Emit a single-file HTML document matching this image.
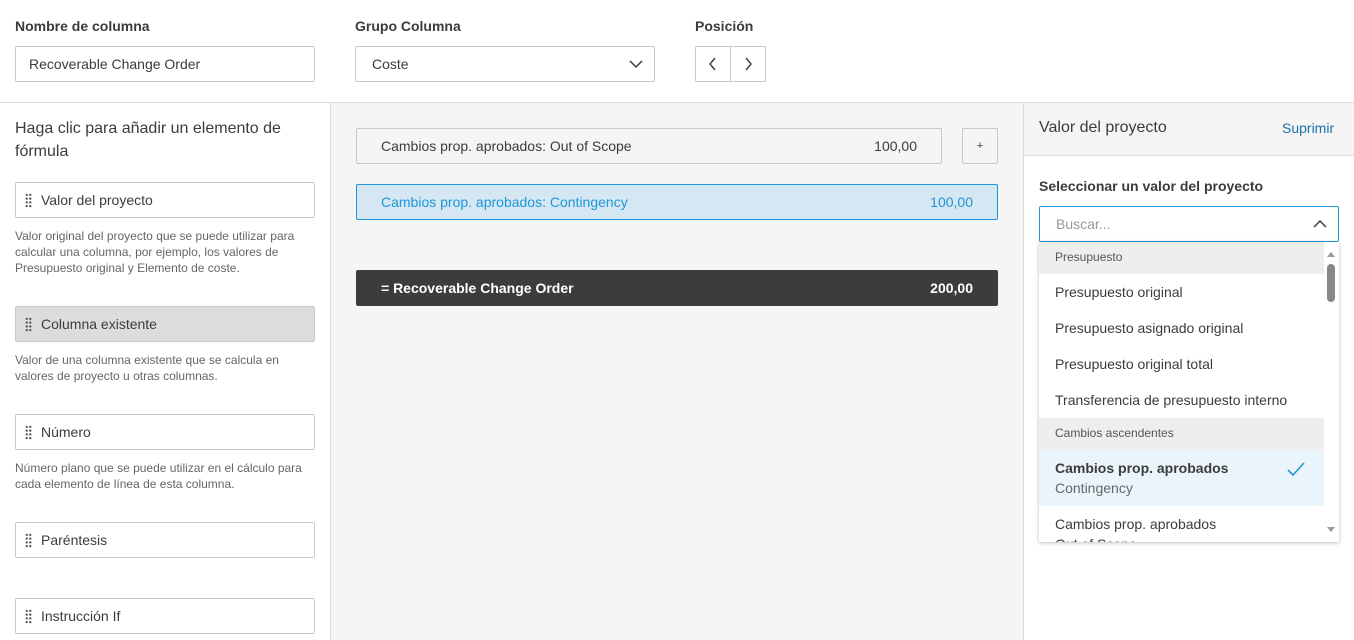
<!DOCTYPE html>
<html><head><meta charset="utf-8"><style>
*{box-sizing:border-box;margin:0;padding:0}
body{width:1354px;height:640px;overflow:hidden;font-family:"Liberation Sans",sans-serif;color:#3c3c3c;background:#fff;position:relative;font-size:14px}
.a{position:absolute}
.lbl{font-weight:bold;font-size:14px;color:#3c3c3c}
.box{position:absolute;border:1px solid #c8c8c8;border-radius:2px;background:#fff;display:flex;align-items:center}
.grip{display:inline-block;width:7px;height:15px;margin:0 9px 0 9px;background-image:radial-gradient(circle,#555 1px,transparent 1.3px);background-size:3.5px 3.75px}
.desc{position:absolute;font-size:12px;line-height:16px;color:#666;width:305px}
.opt{position:absolute;left:1055px;font-size:14px;color:#3c3c3c}
</style></head><body>
<div class="a lbl" style="left:15px;top:18px">Nombre de columna</div>
<div class="a lbl" style="left:355px;top:18px">Grupo Columna</div>
<div class="a lbl" style="left:695px;top:18px">Posición</div>
<div class="box" style="left:15px;top:46px;width:300px;height:36px;padding-left:13px">Recoverable Change Order</div>
<div class="box" style="left:355px;top:46px;width:300px;height:36px;padding-left:16px">Coste
<svg class="a" style="left:273px;top:12px" width="14" height="10"><path d="M1 2l6 6 6-6" stroke="#3c3c3c" stroke-width="1.5" fill="none"/></svg></div>
<div class="box" style="left:695px;top:46px;width:71px;height:36px"></div>
<div class="a" style="left:730px;top:46px;width:1px;height:36px;background:#c8c8c8"></div>
<svg class="a" style="left:708px;top:57px" width="10" height="14"><path d="M7 1L2 7l5 6" stroke="#3c3c3c" stroke-width="1.4" fill="none"/></svg>
<svg class="a" style="left:743px;top:57px" width="10" height="14"><path d="M3 1l5 6-5 6" stroke="#3c3c3c" stroke-width="1.4" fill="none"/></svg>
<div class="a" style="left:0;top:102px;width:1354px;height:1px;background:#dcdcdc"></div>

<div class="a" style="left:15px;top:117px;font-size:16px;line-height:23px;width:300px;color:#3c3c3c">Haga clic para añadir un elemento de fórmula</div>
<div class="box" style="left:15px;top:182px;width:300px;height:36px"><span class="grip"></span>Valor del proyecto</div>
<div class="desc" style="left:15px;top:228px">Valor original del proyecto que se puede utilizar para calcular una columna, por ejemplo, los valores de Presupuesto original y Elemento de coste.</div>
<div class="box" style="left:15px;top:306px;width:300px;height:36px;background:#dcdcdc"><span class="grip"></span>Columna existente</div>
<div class="desc" style="left:15px;top:352px">Valor de una columna existente que se calcula en valores de proyecto u otras columnas.</div>
<div class="box" style="left:15px;top:414px;width:300px;height:36px"><span class="grip"></span>Número</div>
<div class="desc" style="left:15px;top:460px">Número plano que se puede utilizar en el cálculo para cada elemento de línea de esta columna.</div>
<div class="box" style="left:15px;top:522px;width:300px;height:36px"><span class="grip"></span>Paréntesis</div>
<div class="box" style="left:15px;top:598px;width:300px;height:36px"><span class="grip"></span>Instrucción If</div>

<div class="a" style="left:330px;top:103px;width:694px;height:537px;background:#f5f5f5;border-left:1px solid #dcdcdc;border-right:1px solid #dcdcdc"></div>
<div class="box" style="left:356px;top:128px;width:586px;height:36px;padding:0 24px;justify-content:space-between;background:#f5f5f5"><span>Cambios prop. aprobados: Out of Scope</span><span>100,00</span></div>
<div class="box" style="left:962px;top:128px;width:36px;height:36px;justify-content:center;font-size:11px;background:#f5f5f5">+</div>
<div class="box" style="left:356px;top:184px;width:642px;height:36px;padding:0 24px;justify-content:space-between;background:#d4e7f3;border-color:#1f96d6;color:#1f96d6"><span>Cambios prop. aprobados: Contingency</span><span>100,00</span></div>
<div class="box" style="left:356px;top:270px;width:642px;height:36px;padding:0 24px;justify-content:space-between;background:#3c3c3c;border-color:#3c3c3c;color:#fff;font-weight:bold"><span>= Recoverable Change Order</span><span>200,00</span></div>

<div class="a" style="left:1024px;top:103px;width:330px;height:53px;background:#f5f5f5;border-bottom:1px solid #dcdcdc"></div>
<div class="a" style="left:1039px;top:119px;font-size:16px">Valor del proyecto</div>
<div class="a" style="left:1282px;top:120px;font-size:14px;color:#1f70a8">Suprimir</div>
<div class="a lbl" style="left:1039px;top:178px">Seleccionar un valor del proyecto</div>
<div class="box" style="left:1039px;top:206px;width:300px;height:36px;border-color:#1f96d6;padding-left:16px;color:#999">Buscar...
<svg class="a" style="left:273px;top:12px" width="14" height="10"><path d="M1 8l6-6 6 6" stroke="#3c3c3c" stroke-width="1.5" fill="none"/></svg></div>
<div class="a" style="left:1039px;top:242px;width:300px;height:300px;background:#fff;box-shadow:0 1px 4px rgba(0,0,0,.25);overflow:hidden">
 <div class="a" style="left:0;top:0;width:285px;height:32px;background:#eeeeee"></div>
 <div class="a" style="left:0;top:176px;width:285px;height:32px;background:#eeeeee"></div>
 <div class="a" style="left:0;top:208px;width:285px;height:56px;background:#eaf4fb"></div>
 <div class="a" style="left:288px;top:22px;width:8px;height:38px;background:#888;border-radius:4px"></div>
 <div class="a" style="left:288px;top:10px;width:0;height:0;border:4px solid transparent;border-bottom:5px solid #999;border-top:0"></div>
 <div class="a" style="left:288px;top:285px;width:0;height:0;border:4px solid transparent;border-top:5px solid #999;border-bottom:0"></div>
</div>
<div class="opt" style="top:250px;font-size:12px;color:#555">Presupuesto</div>
<div class="opt" style="top:284px">Presupuesto original</div>
<div class="opt" style="top:320px">Presupuesto asignado original</div>
<div class="opt" style="top:356px">Presupuesto original total</div>
<div class="opt" style="top:392px">Transferencia de presupuesto interno</div>
<div class="opt" style="top:426px;font-size:12px;color:#555">Cambios ascendentes</div>
<div class="opt" style="top:460px;font-weight:bold">Cambios prop. aprobados</div>
<div class="opt" style="top:480px;color:#666">Contingency</div>
<svg class="a" style="left:1286px;top:461px" width="20" height="16"><path d="M2 9l5 5L18 2" stroke="#1f96d6" stroke-width="1.6" fill="none"/></svg>
<div class="opt" style="top:516px">Cambios prop. aprobados</div>
<div class="a" style="left:1055px;top:536px;height:6px;overflow:hidden;color:#3c3c3c;line-height:16px"><span>Out of Scope</span></div>
</body></html>
